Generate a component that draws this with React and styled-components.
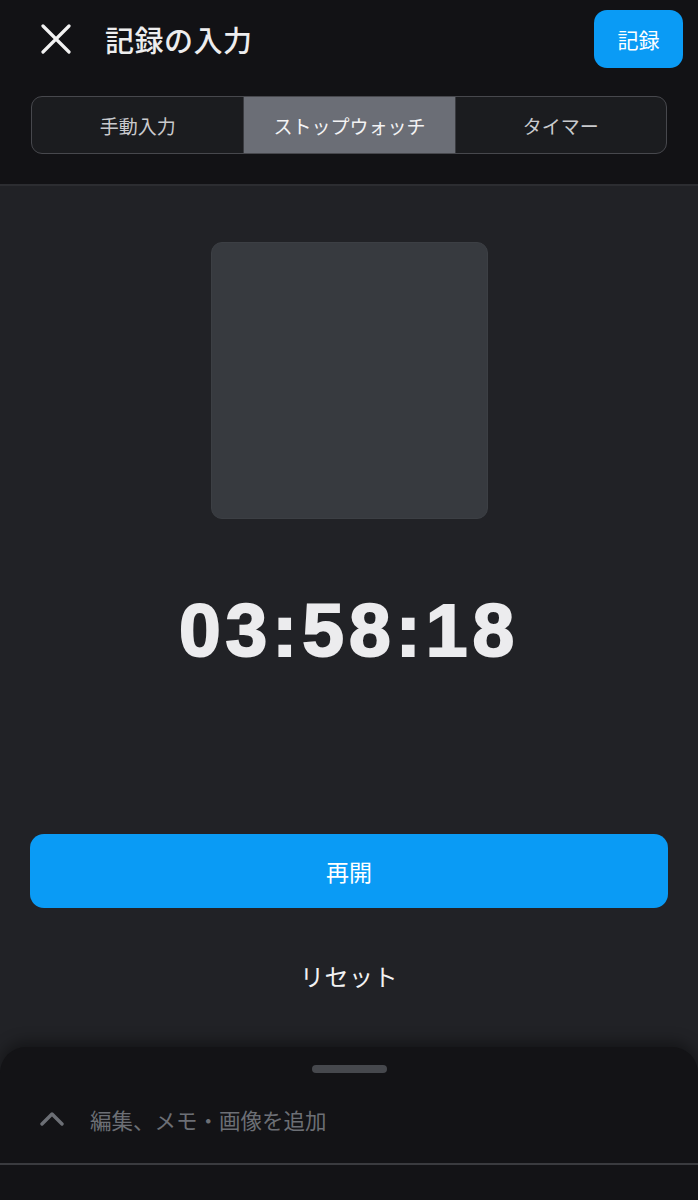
import React from "react";
import styled, { createGlobalStyle } from "styled-components";

const GlobalStyle = createGlobalStyle`
  html, body { margin: 0; padding: 0; background: #121215; }
  body { font-family: "Noto Sans CJK JP", "Noto Sans", sans-serif; }
  * { box-sizing: border-box; }
`;

const Page = styled.div`
  width: 698px;
  height: 1200px;
  display: flex;
  flex-direction: column;
  overflow: hidden;
  background: #212226;
`;

const Header = styled.header`
  background: #121215;
  border-bottom: 2px solid #2c2d31;
  padding: 10px 15px 30px 31px;
  display: flex;
  flex-direction: column;
  gap: 28px;
`;

const TopRow = styled.div`
  display: flex;
  align-items: center;
  height: 58px;
`;

const CloseButton = styled.button`
  width: 50px;
  height: 50px;
  background: none;
  border: 0;
  padding: 0;
  display: flex;
  align-items: center;
  justify-content: center;
  color: #f2f2f2;
`;

const Title = styled.h1`
  margin: 0 0 0 24px;
  flex: 1;
  font-size: 29px;
  font-weight: 500;
  color: #ededee;
  letter-spacing: 0.5px;
`;

const PrimarySmall = styled.button`
  width: 89px;
  height: 58px;
  border: 0;
  border-radius: 13px;
  background: #0a9bf5;
  color: #fff;
  font-family: inherit;
  font-size: 21px;
  font-weight: 400;
`;

const Segmented = styled.div`
  display: grid;
  grid-template-columns: repeat(3, 1fr);
  height: 58px;
  margin-right: 16px;
  border: 1.5px solid #47484d;
  border-radius: 11px;
  overflow: hidden;
  background: #1b1c1f;
`;

const Segment = styled.div`
  display: flex;
  align-items: center;
  justify-content: center;
  font-size: 19px;
  font-weight: 400;
  color: ${(p) => (p.$active ? "#f3f3f4" : "#c9cacd")};
  background: ${(p) => (p.$active ? "#6b6e76" : "transparent")};
  border-left: ${(p) => (p.$first ? "none" : "1px solid #3a3b40")};
`;

const Main = styled.main`
  flex: 1;
  display: flex;
  flex-direction: column;
  align-items: center;
  padding-top: 56px;
`;

const Artwork = styled.div`
  width: 277px;
  height: 277px;
  border-radius: 11px;
  background: #373a3f;
  border: 1px solid #3c3f44;
`;

const Time = styled.div`
  margin-top: 74px;
  font-family: "Liberation Sans", Arial, sans-serif;
  font-weight: 900;
  font-size: 75px;
  line-height: 1;
  letter-spacing: 5px;
  color: #ececee;
  -webkit-text-stroke: 2px #ececee;
`;

const Actions = styled.div`
  align-self: stretch;
  padding: 0 30px;
  margin-top: 166px;
  display: flex;
  flex-direction: column;
  align-items: center;
`;

const ResumeButton = styled.button`
  width: 100%;
  height: 74px;
  border: 0;
  border-radius: 14px;
  background: #0a9bf5;
  color: #fff;
  font-family: inherit;
  font-size: 23px;
  font-weight: 400;
`;

const ResetButton = styled.button`
  margin-top: 43px;
  height: 48px;
  border: 0;
  background: none;
  color: #f2f2f3;
  font-family: inherit;
  font-size: 24px;
  font-weight: 400;
  letter-spacing: 0.5px;
`;

const Sheet = styled.section`
  margin-top: auto;
  align-self: stretch;
  background: #131316;
  border-radius: 26px 26px 0 0;
  box-shadow: 0 -6px 14px rgba(0, 0, 0, 0.35);
  display: flex;
  flex-direction: column;
  align-items: center;
  height: 153px;
  padding-top: 18px;
`;

const Handle = styled.div`
  width: 75px;
  height: 8px;
  border-radius: 4px;
  background: #46484d;
`;

const SheetRow = styled.div`
  align-self: stretch;
  display: flex;
  align-items: center;
  gap: 26px;
  padding: 0 40px 16px;
  height: 56px;
  margin-top: 18px;
  color: #6c6f75;
  font-size: 21.5px;
  font-weight: 400;
  border-bottom: 2px solid #3a3b3f;
  box-sizing: content-box;
`;

export default function App() {
  return (
    <>
      <GlobalStyle />
      <Page>
        <Header>
          <TopRow>
            <CloseButton aria-label="閉じる">
              <svg width="30" height="30" viewBox="0 0 30 30">
                <path
                  d="M2 2 L28 28 M28 2 L2 28"
                  stroke="currentColor"
                  strokeWidth="3.2"
                  strokeLinecap="round"
                  fill="none"
                />
              </svg>
            </CloseButton>
            <Title>記録の入力</Title>
            <PrimarySmall>記録</PrimarySmall>
          </TopRow>
          <Segmented>
            <Segment $first>手動入力</Segment>
            <Segment $active>ストップウォッチ</Segment>
            <Segment>タイマー</Segment>
          </Segmented>
        </Header>
        <Main>
          <Artwork />
          <Time>03:58:18</Time>
          <Actions>
            <ResumeButton>再開</ResumeButton>
            <ResetButton>リセット</ResetButton>
          </Actions>
          <Sheet>
            <Handle />
            <SheetRow>
              <svg width="24" height="16" viewBox="0 0 24 16">
                <path
                  d="M2 13 L12 3 L22 13"
                  stroke="currentColor"
                  strokeWidth="3.4"
                  strokeLinecap="round"
                  strokeLinejoin="round"
                  fill="none"
                />
              </svg>
              <span>編集、メモ・画像を追加</span>
            </SheetRow>
          </Sheet>
        </Main>
      </Page>
    </>
  );
}
